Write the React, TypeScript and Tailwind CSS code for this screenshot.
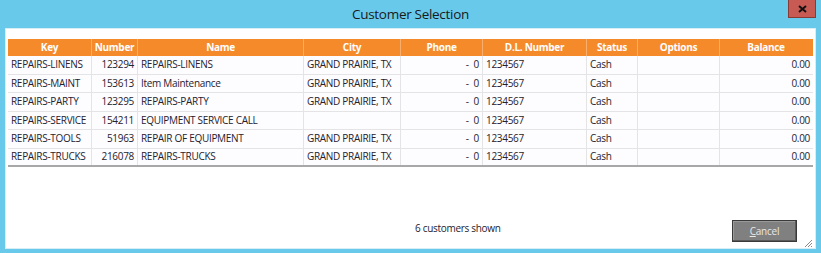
import React from "react";

const rows = [
  ["REPAIRS-LINENS", "123294", "REPAIRS-LINENS", "GRAND PRAIRIE, TX"],
  ["REPAIRS-MAINT", "153613", "Item Maintenance", "GRAND PRAIRIE, TX"],
  ["REPAIRS-PARTY", "123295", "REPAIRS-PARTY", "GRAND PRAIRIE, TX"],
  ["REPAIRS-SERVICE", "154211", "EQUIPMENT SERVICE CALL", ""],
  ["REPAIRS-TOOLS", "51963", "REPAIR OF EQUIPMENT", "GRAND PRAIRIE, TX"],
  ["REPAIRS-TRUCKS", "216078", "REPAIRS-TRUCKS", "GRAND PRAIRIE, TX"],
];

const headers = ["Key", "Number", "Name", "City", "Phone", "D.L. Number", "Status", "Options", "Balance"];

const cols = "grid grid-cols-[84px_46px_166px_97px_82px_104px_51px_82px_92px]";

export default function App() {
  return (
    <div
      className="w-[821px] h-[253px] bg-[#68c9ea] flex flex-col overflow-hidden"
      style={{ fontFamily: '"Open Sans", "Noto Sans", sans-serif' }}
    >
      <div className="h-[28px] relative flex items-center justify-center shrink-0">
        <span className="text-[13.5px] text-[#1a1a1a] tracking-[-0.3px]">Customer Selection</span>
        <div className="absolute right-[5px] top-0 w-[28px] h-[18px] bg-[#c75a52] border border-[#8a3a34] border-t-0 flex items-center justify-center">
          <svg width="9" height="8" viewBox="0 0 9 8">
            <path d="M1 1 L8 7 M8 1 L1 7" stroke="#111" strokeWidth="2" />
          </svg>
        </div>
      </div>
      <div className="flex-1 mx-[5px] mb-[4px] border border-[#d8eef6] bg-white flex flex-col pl-[2px] pr-[2px] pt-[10px]">
        <div className="text-[10px] text-[#25222e] tracking-[-0.3px]">
          <div className={`${cols} h-[17px] bg-[#f58a2b] text-white font-bold`}>
            {headers.map((h, i) => (
              <div
                key={h}
                className={`flex items-center justify-center ${i < headers.length - 1 ? "border-r border-[#f7ad6c]" : ""}`}
              >
                {h}
              </div>
            ))}
          </div>
          {rows.map((r, idx) => (
            <div
              key={idx}
              className={`${cols} h-[18.5px] bg-[#fdfcfe] ${idx === rows.length - 1 ? "border-b-2 border-[#a8a8a8]" : "border-b border-[#e4e4e6]"}`}
            >
              <div className="flex items-center pl-[3px] border-r border-[#e4e4e6] whitespace-nowrap">{r[0]}</div>
              <div className="flex items-center justify-end pr-[3px] border-r border-[#e4e4e6]">{r[1]}</div>
              <div className="flex items-center pl-[3px] border-r border-[#e4e4e6] whitespace-nowrap">{r[2]}</div>
              <div className="flex items-center pl-[3px] border-r border-[#e4e4e6] whitespace-nowrap">{r[3]}</div>
              <div className="flex items-center justify-end pr-[3px] border-r border-[#e4e4e6] gap-[5px]">
                <span>-</span>
                <span>0</span>
              </div>
              <div className="flex items-center pl-[3px] border-r border-[#e4e4e6]">1234567</div>
              <div className="flex items-center pl-[3px] border-r border-[#e4e4e6]">Cash</div>
              <div className="border-r border-[#e4e4e6]"></div>
              <div className="flex items-center justify-end pr-[2px]">0.00</div>
            </div>
          ))}
        </div>
        <div className="flex-1 flex items-end pb-[6px] relative">
          <div className="ml-[407px] mb-[6px] text-[10px] tracking-[-0.3px] text-[#25222e]">6 customers shown</div>
          <div className="ml-auto mr-[16px] w-[65px] h-[22px] bg-[#808080] border border-[#3a3a3a] shadow-[inset_-1px_-1px_0_#5a5a5a,inset_1px_1px_0_#9a9a9a] flex items-center justify-center text-[10px] tracking-[-0.2px] text-[#e8e8e8]">
            <span>
              <span className="underline">C</span>ancel
            </span>
          </div>
          <svg className="absolute right-[0px] bottom-[0px]" width="10" height="10" viewBox="0 0 10 10">
            <path d="M9 2 L2 9 M9 5 L5 9 M9 8 L8 9" stroke="#8a8a8a" strokeWidth="1" />
          </svg>
        </div>
      </div>
    </div>
  );
}
